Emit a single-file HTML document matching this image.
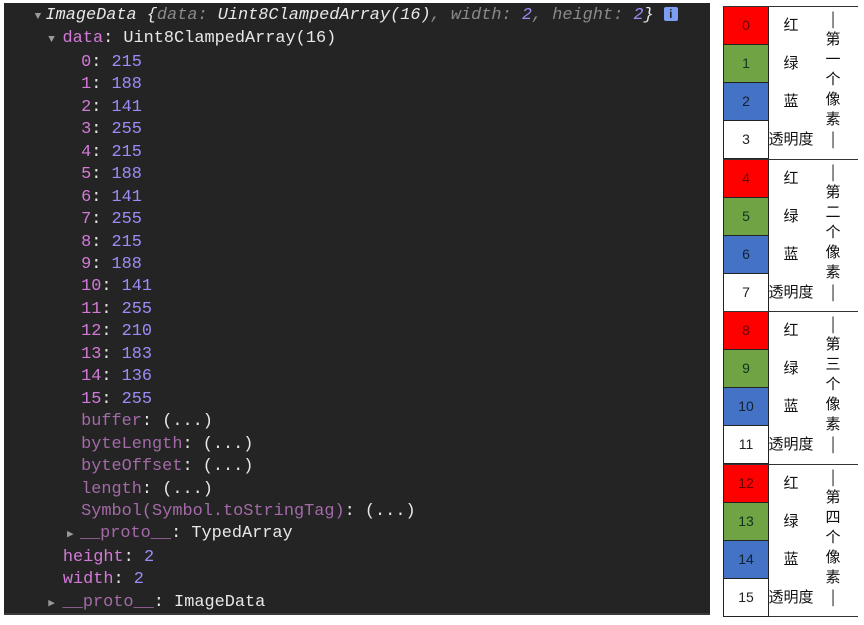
<!DOCTYPE html><html><head><meta charset="utf-8"><style>
body{margin:0;width:864px;height:625px;background:#fff;position:relative;overflow:hidden}
#c{position:absolute;left:4px;top:3px;width:706px;height:610px;background:#242424;border-bottom:2px solid #3a3a3a}
#code{position:absolute;left:0;top:5px;margin:0;font:16.9px/22.46px "Liberation Mono",monospace;color:#e8e8e8;white-space:pre}
.k{color:#d37ad8}.n{color:#9d8cf7}.d{color:#a46aa8}.g{color:#8a8a8a}.i{font-style:italic}
.t{color:#999;font-size:11px;display:inline-block;width:15px;text-align:center}
.ic{display:inline-block;width:14px;height:14px;background:#7d9cf3;border-radius:2px;color:#242424;font:bold 12px/14px "Liberation Sans";text-align:center;vertical-align:1px}
#tb{position:absolute;left:723px;top:7px;width:135px}
.gp{position:relative;height:151.5px;border-top:1px solid #333;border-bottom:1px solid #333;margin-top:-1px}
.r{position:absolute;left:0;width:44px;height:37px;border:1px solid #222;border-top:none;font:14px/37px "Liberation Sans";text-align:center}
.z{position:absolute;left:46px;width:44px;font:15px/37px "Liberation Sans","Noto Sans CJK SC",sans-serif;text-align:center;color:#111}
.v{position:absolute;left:100px;width:20px;top:2px;font:15px/20px "Noto Sans CJK SC",sans-serif;text-align:center;color:#111}
</style></head><body>
<div id="c"></div>
<pre id="code">   <span class="t">▼</span><span class="i">ImageData {<span class="g">data: </span>Uint8ClampedArray(16)<span class="g">, width: </span><span class="n">2</span><span class="g">, height: </span><span class="n">2</span>}</span> <span class="ic">i</span>
    <span class="t" style="width:22px">▼</span><span class="k">data</span>: Uint8ClampedArray(16)
        <span class="k">0</span>: <span class="n">215</span>
        <span class="k">1</span>: <span class="n">188</span>
        <span class="k">2</span>: <span class="n">141</span>
        <span class="k">3</span>: <span class="n">255</span>
        <span class="k">4</span>: <span class="n">215</span>
        <span class="k">5</span>: <span class="n">188</span>
        <span class="k">6</span>: <span class="n">141</span>
        <span class="k">7</span>: <span class="n">255</span>
        <span class="k">8</span>: <span class="n">215</span>
        <span class="k">9</span>: <span class="n">188</span>
        <span class="k">10</span>: <span class="n">141</span>
        <span class="k">11</span>: <span class="n">255</span>
        <span class="k">12</span>: <span class="n">210</span>
        <span class="k">13</span>: <span class="n">183</span>
        <span class="k">14</span>: <span class="n">136</span>
        <span class="k">15</span>: <span class="n">255</span>
        <span class="d">buffer</span>: (...)
        <span class="d">byteLength</span>: (...)
        <span class="d">byteOffset</span>: (...)
        <span class="d">length</span>: (...)
        <span class="d">Symbol(Symbol.toStringTag)</span>: (...)
      <span class="t" style="width:19px">▶</span><span class="d">__proto__</span>: TypedArray
      <span style="display:inline-block;width:2px"></span><span class="k">height</span>: <span class="n">2</span>
      <span style="display:inline-block;width:2px"></span><span class="k">width</span>: <span class="n">2</span>
    <span class="t" style="width:22px">▶</span><span class="d">__proto__</span>: ImageData</pre>
<div id="tb">
<div class="gp"><div class="r" style="top:0;background:#f00;color:#600">0</div><div class="r" style="top:38px;background:#6fa343;color:#132">1</div><div class="r" style="top:76px;background:#4472c4;color:#123">2</div><div class="r" style="top:114px;background:#fff;color:#222">3</div><div class="z" style="top:0">红</div><div class="z" style="top:38px">绿</div><div class="z" style="top:76px">蓝</div><div class="z" style="top:114px;left:44px;width:48px">透明度</div><div class="v">|<br>第<br>一<br>个<br>像<br>素<br>|</div></div>
<div class="gp"><div class="r" style="top:0;background:#f00;color:#600">4</div><div class="r" style="top:38px;background:#6fa343;color:#132">5</div><div class="r" style="top:76px;background:#4472c4;color:#123">6</div><div class="r" style="top:114px;background:#fff;color:#222">7</div><div class="z" style="top:0">红</div><div class="z" style="top:38px">绿</div><div class="z" style="top:76px">蓝</div><div class="z" style="top:114px;left:44px;width:48px">透明度</div><div class="v">|<br>第<br>二<br>个<br>像<br>素<br>|</div></div>
<div class="gp"><div class="r" style="top:0;background:#f00;color:#600">8</div><div class="r" style="top:38px;background:#6fa343;color:#132">9</div><div class="r" style="top:76px;background:#4472c4;color:#123">10</div><div class="r" style="top:114px;background:#fff;color:#222">11</div><div class="z" style="top:0">红</div><div class="z" style="top:38px">绿</div><div class="z" style="top:76px">蓝</div><div class="z" style="top:114px;left:44px;width:48px">透明度</div><div class="v">|<br>第<br>三<br>个<br>像<br>素<br>|</div></div>
<div class="gp"><div class="r" style="top:0;background:#f00;color:#600">12</div><div class="r" style="top:38px;background:#6fa343;color:#132">13</div><div class="r" style="top:76px;background:#4472c4;color:#123">14</div><div class="r" style="top:114px;background:#fff;color:#222">15</div><div class="z" style="top:0">红</div><div class="z" style="top:38px">绿</div><div class="z" style="top:76px">蓝</div><div class="z" style="top:114px;left:44px;width:48px">透明度</div><div class="v">|<br>第<br>四<br>个<br>像<br>素<br>|</div></div>
</div>
</body></html>
